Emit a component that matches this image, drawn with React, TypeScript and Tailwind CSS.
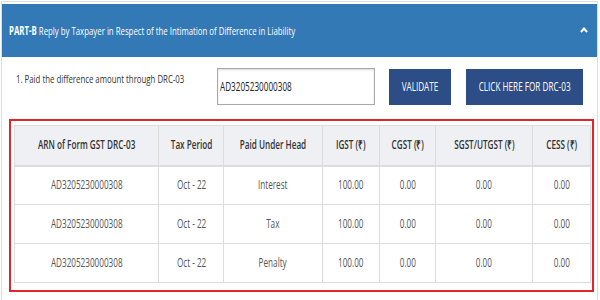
import React from "react";

const S = ({ children, className = "" }: { children: React.ReactNode; className?: string }) => (
  <span className={"inline-block whitespace-nowrap scale-x-[0.68] " + className}>{children}</span>
);

const cols = [143, 65, 97, 57, 56, 97, 58];
const heads = ["ARN of Form GST DRC-03", "Tax Period", "Paid Under Head", "IGST (₹)", "CGST (₹)", "SGST/UTGST (₹)", "CESS (₹)"];
const rows = [
  ["AD3205230000308", "Oct - 22", "Interest", "100.00", "0.00", "0.00", "0.00"],
  ["AD3205230000308", "Oct - 22", "Tax", "100.00", "0.00", "0.00", "0.00"],
  ["AD3205230000308", "Oct - 22", "Penalty", "100.00", "0.00", "0.00", "0.00"],
];

export default function App() {
  return (
    <div className="w-[600px] h-[300px] bg-white pt-[1px] pl-[1px] overflow-hidden" style={{ fontFamily: '"Open Sans", sans-serif' }}>
      <div className="w-[597px] h-[310px] border border-[#d9dee5] pt-[2px]">
        <div className="h-[53px] bg-[#3379b6] flex items-center justify-between pl-[7px] pr-[9px] text-white text-[11.5px]">
          <S className="origin-left">
            <span className="font-bold">PART-B</span> Reply by Taxpayer in Respect of the Intimation of Difference in Liability
          </S>
          <svg width="8" height="6" viewBox="0 0 8 6" className="mt-[-2px]">
            <polyline points="1,5 4,1.5 7,5" fill="none" stroke="white" strokeWidth="2" />
          </svg>
        </div>
        <div className="pt-[11px] pl-[7px]">
          <div className="flex items-start h-[37px] pl-[7px]">
            <div className="w-[201px] pt-[2px] text-[11.5px] text-[#333]">
              <S className="origin-left">1. Paid the difference amount through DRC-03</S>
            </div>
            <div className="w-[158px] h-[37px] border border-[#a9a9a9] shadow-[inset_0_1px_2px_rgba(0,0,0,0.15)] flex items-center pl-[2px] text-[12px] text-[#222]">
              <S className="origin-left">AD3205230000308</S>
            </div>
            <div className="ml-[14px] w-[62px] h-[36px] mt-[1px] bg-[#2c4d85] text-white text-[12px] flex items-center justify-center">
              <S>VALIDATE</S>
            </div>
            <div className="ml-[15px] w-[117px] h-[36px] mt-[1px] bg-[#2c4d85] text-white text-[12px] flex items-center justify-center">
              <S>CLICK HERE FOR DRC-03</S>
            </div>
          </div>
          <div className="mt-[14px] w-[585px] border-2 border-[#e0262b] pt-[4px] pl-[3px] pb-[7px]">
            <table className="border-collapse text-[12px] table-fixed">
              <colgroup>
                {cols.map((w, i) => (
                  <col key={i} style={{ width: w }} />
                ))}
              </colgroup>
              <thead>
                <tr className="h-[40px] bg-[#eef0f3]">
                  {heads.map((h, i) => (
                    <th key={i} className="border border-[#dcdcdc] border-b-2 text-center font-semibold text-[#333] p-0">
                      <S>{h}</S>
                    </th>
                  ))}
                </tr>
              </thead>
              <tbody>
                {rows.map((r, ri) => (
                  <tr key={ri} className="h-[39px]">
                    {r.map((c, ci) => (
                      <td key={ci} className="border border-[#dcdcdc] text-center text-[#555] p-0">
                        <S>{c}</S>
                      </td>
                    ))}
                  </tr>
                ))}
              </tbody>
            </table>
          </div>
        </div>
      </div>
    </div>
  );
}
